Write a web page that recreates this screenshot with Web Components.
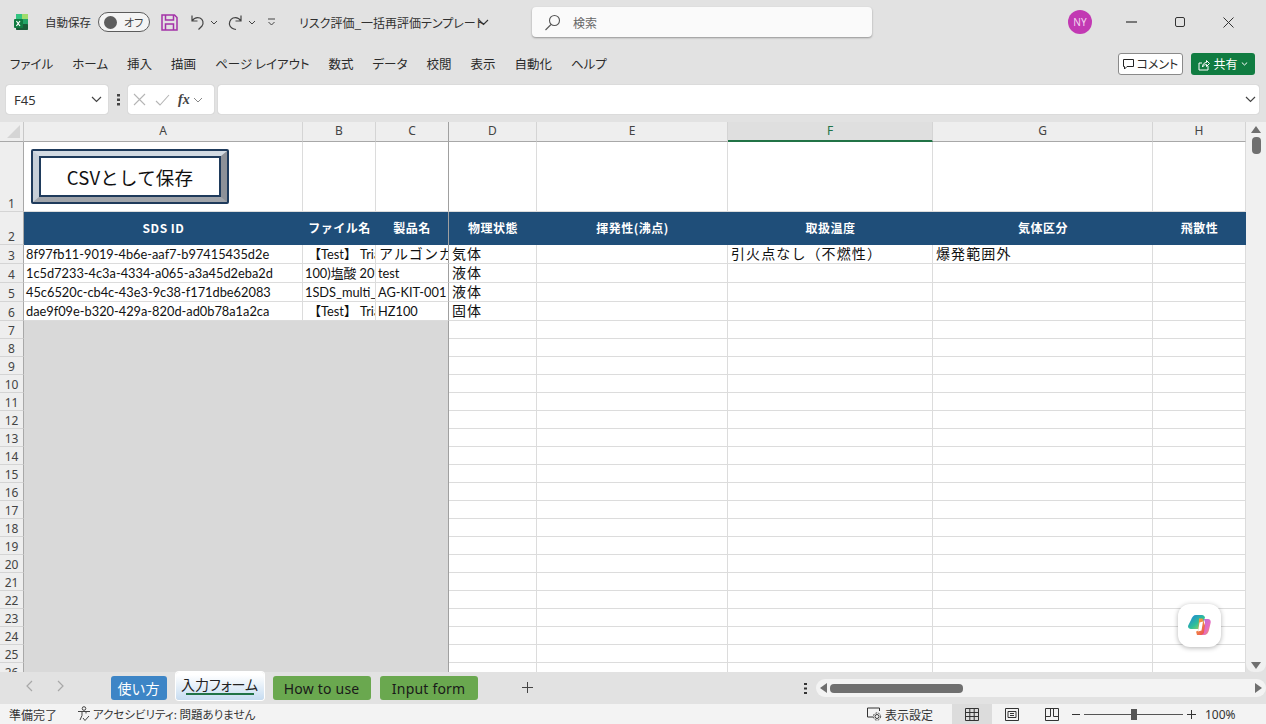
<!DOCTYPE html>
<html lang="ja">
<head>
<meta charset="utf-8">
<title>Excel</title>
<style>
  html,body{margin:0;height:100%;overflow:hidden;background:#e2e2e2;}
  body{font-family:"Noto Sans","Noto Sans CJK JP",sans-serif;}
</style>
</head>
<body>
<xl-app>
  <xl-titlebar slot="top" filename="リスク評価_一括再評価テンプレート.⋯"></xl-titlebar>
  <xl-ribbon slot="top">
    <span>ファイル</span><span>ホーム</span><span>挿入</span><span>描画</span><span>ページ レイアウト</span><span>数式</span><span>データ</span><span>校閲</span><span>表示</span><span>自動化</span><span>ヘルプ</span>
  </xl-ribbon>
  <xl-formula slot="top" cell="F45"></xl-formula>
  <xl-sheet slot="main"></xl-sheet>
  <xl-tabs slot="bottom">
    <sheet-tab kind="blue">使い方</sheet-tab>
    <sheet-tab kind="active">入力フォーム</sheet-tab>
    <sheet-tab kind="green">How to use</sheet-tab>
    <sheet-tab kind="green">Input form</sheet-tab>
  </xl-tabs>
  <xl-status slot="bottom"></xl-status>
</xl-app>

<script>
const CJK = '"Noto Sans CJK JP","Noto Sans",sans-serif';

class XlApp extends HTMLElement {
  constructor() {
    super();
    this.attachShadow({ mode: "open" });
    this.shadowRoot.innerHTML = `
      <style>
        :host{display:flex;flex-direction:column;width:1266px;height:724px;overflow:hidden;background:#e2e2e2;}
      </style>
      <slot name="top"></slot>
      <slot name="main"></slot>
      <slot name="bottom"></slot>`;
  }
}

class XlTitlebar extends HTMLElement {
  constructor() {
    super();
    this.attachShadow({ mode: "open" });
    const name = this.getAttribute("filename") || "";
    this.shadowRoot.innerHTML = `
      <style>
        :host{display:flex;align-items:center;height:44px;box-sizing:border-box;padding-left:14px;font:11.5px ${CJK};color:#303030;font-feature-settings:"palt";}
        svg{display:block;flex:none;}
        .auto{margin-left:17px;width:46px;white-space:nowrap;}
        .toggle{margin-left:7px;width:52px;height:20px;box-sizing:border-box;border:1px solid #5c5c5c;border-radius:10px;background:#f4f4f4;display:flex;align-items:center;padding:0 3px;gap:7px;font-size:11px;color:#444;}
        .toggle i{width:13px;height:13px;margin-left:2px;border-radius:50%;background:#5e5e5e;}
        .file{margin-left:23px;width:186px;font-size:12px;white-space:nowrap;overflow:hidden;}
        .search{margin-left:34px;width:340px;height:30px;box-sizing:border-box;background:#fafafa;border-radius:4px;box-shadow:0 1px 2px rgba(0,0,0,.35);display:flex;align-items:center;padding-left:12px;gap:12px;color:#666;font-size:12px;}
        .avatar{margin-left:196px;width:24px;height:24px;border-radius:50%;background:#c239b3;color:#f3d6ef;font:10px "Noto Sans",sans-serif;display:flex;align-items:center;justify-content:center;}
      </style>
      <svg width="14" height="16" viewBox="0 0 14 16"><rect x="2" y="0" width="12" height="16" rx="1.5" fill="#21a366"/><rect x="8" y="0" width="6" height="5" fill="#9fdc6c"/><rect x="2" y="0" width="6" height="5" fill="#33c481"/><rect x="2" y="10" width="12" height="6" rx="1" fill="#185c37"/><rect x="0" y="5" width="9" height="9" rx="1" fill="#107c41"/><path d="M2.4 7l3.6 5M6 7l-3.6 5" stroke="#fff" stroke-width="1.2"/></svg>
      <span class="auto">自動保存</span>
      <div class="toggle"><i></i><span>オフ</span></div>
      <svg style="margin-left:11px" width="17" height="17" viewBox="0 0 17 17" fill="none" stroke="#a433a8" stroke-width="1.5"><path d="M1 1h12.5L16 3.5V16H1z"/><path d="M4.5 1v5h8V1M4.5 16v-6h8v6"/></svg>
      <svg style="margin-left:12px" width="16" height="17" viewBox="0 0 16 17" fill="none" stroke="#444" stroke-width="1.2"><path d="M2 1.5V7h5.5M2 7c2-3 5-4 8-3 3 1.500 4 5 2 8l-3.500 3.500"/></svg>
      <svg style="margin-left:4px" width="8" height="5" viewBox="0 0 8 5" fill="none" stroke="#444"><path d="M1 1l3 3 3-3"/></svg>
      <svg style="margin-left:9px" width="16" height="17" viewBox="0 0 16 17" fill="none" stroke="#444" stroke-width="1.2"><path d="M14 1.500V7H8.500M14 7c-2-3-5-4-8-3C3 5.500 1.500 9 3 12c1 2 3 3 6 3.500"/></svg>
      <svg style="margin-left:5px" width="8" height="5" viewBox="0 0 8 5" fill="none" stroke="#444"><path d="M1 1l3 3 3-3"/></svg>
      <svg style="margin-left:11px" width="9" height="8" viewBox="0 0 9 8" fill="none" stroke="#444"><path d="M1 1h7M1.500 4l3 3 3-3"/></svg>
      <span class="file" style="margin-left:23px">${name}</span>
      <svg style="margin-left:-7px" width="11" height="7" viewBox="0 0 11 7" fill="none" stroke="#333" stroke-width="1.1"><path d="M1 1l4.500 4.500L10 1"/></svg>
      <div class="search" style="margin-left:43px">
        <svg width="17" height="17" viewBox="0 0 17 17" fill="none" stroke="#555" stroke-width="1.1"><circle cx="10.500" cy="6.500" r="5"/><path d="M7 10.500L1.500 16"/></svg>
        <span>検索</span>
      </div>
      <div class="avatar">NY</div>
      <svg style="margin-left:34px" width="11" height="2" viewBox="0 0 11 2"><path d="M0 1h11" stroke="#333" stroke-width="1.200"/></svg>
      <svg style="margin-left:38px" width="10" height="10" viewBox="0 0 10 10" fill="none" stroke="#333"><rect x=".5" y=".5" width="9" height="9" rx="1.500"/></svg>
      <svg style="margin-left:38px" width="11" height="11" viewBox="0 0 11 11" fill="none" stroke="#333"><path d="M.5.5l10 10M10.500.5l-10 10"/></svg>`;
  }
}

class XlRibbon extends HTMLElement {
  constructor() {
    super();
    this.attachShadow({ mode: "open" });
    this.shadowRoot.innerHTML = `
      <style>
        :host{display:flex;align-items:center;height:40px;box-sizing:border-box;padding:0 11px 0 10px;font:12.5px/1 ${CJK};color:#2b2b2b;font-feature-settings:"palt";}
        .tabs{display:flex;gap:19px;flex:1;white-space:nowrap;}
        ::slotted(span){display:block;}
        .btn{height:22px;box-sizing:border-box;border-radius:3px;display:flex;align-items:center;justify-content:center;gap:3px;font-size:12px;}
        .comment{width:65px;background:#fff;border:1px solid #8a8a8a;}
        .share{width:64px;margin-left:8px;background:#107c41;color:#fff;}
        svg{display:block;flex:none;}
      </style>
      <div class="tabs"><slot></slot></div>
      <div class="btn comment">
        <svg width="11" height="11" viewBox="0 0 11 11" fill="none" stroke="#222"><path d="M.5.500h10v7H4L1.500 10V7.500h-1z"/></svg>
        <span>コメント</span>
      </div>
      <div class="btn share">
        <svg width="12" height="13" viewBox="0 0 12 13" fill="none" stroke="#fff"><path d="M4 5H1v7h9V8M4.500 9c0-3 2-4.500 4-4.500V2.500l3 3-3 3V6.500c-1.500 0-3 .8-4 2.500z"/></svg>
        <span>共有</span>
        <svg width="7" height="4" viewBox="0 0 7 4" fill="none" stroke="#fff"><path d="M.8.500l2.700 2.500L6.200.500"/></svg>
      </div>`;
  }
}

class XlFormula extends HTMLElement {
  constructor() {
    super();
    this.attachShadow({ mode: "open" });
    this.shadowRoot.innerHTML = `
      <style>
        :host{display:flex;align-items:flex-start;height:38px;box-sizing:border-box;padding:1px 7px 0 6px;font:13px "Noto Sans",sans-serif;color:#333;}
        .box{height:29px;box-sizing:border-box;background:#fff;border-radius:3px;box-shadow:0 0 1px rgba(0,0,0,.3);display:flex;align-items:center;}
        .name{width:102px;padding:0 6px 0 8px;justify-content:space-between;}
        .dots{width:20px;height:29px;display:flex;align-items:center;justify-content:center;}
        .fx{width:86px;padding-left:5px;gap:9px;}
        .fx b{font:italic bold 14px "Liberation Serif",serif;color:#444;margin-left:-1px;margin-right:-6px;}
        .input{flex:1;margin-left:4px;justify-content:flex-end;padding-right:3px;}
        svg{display:block;flex:none;}
      </style>
      <div class="box name"><span>${this.getAttribute("cell")}</span>
        <svg width="11" height="7" viewBox="0 0 11 7" fill="none" stroke="#444" stroke-width="1.2"><path d="M1 1l4.500 4.500L10 1"/></svg></div>
      <div class="dots"><svg width="3" height="12" viewBox="0 0 3 12" fill="#444"><rect width="3" height="2.500"/><rect y="4.500" width="3" height="2.500"/><rect y="9" width="3" height="2.500"/></svg></div>
      <div class="box fx">
        <svg width="13" height="13" viewBox="0 0 13 13" fill="none" stroke="#b5b5b5" stroke-width="1.100"><path d="M1 1l11 11M12 1L1 12"/></svg>
        <svg width="15" height="12" viewBox="0 0 15 12" fill="none" stroke="#b5b5b5" stroke-width="1.100"><path d="M1 7l4 4 9-10"/></svg>
        <b>fx</b>
        <svg width="10" height="6" viewBox="0 0 10 6" fill="none" stroke="#888"><path d="M1 1l4 4 4-4"/></svg>
      </div>
      <div class="box input"><svg width="11" height="7" viewBox="0 0 11 7" fill="none" stroke="#444" stroke-width="1.2"><path d="M1 1l4.500 4.500L10 1"/></svg></div>`;
  }
}

const COLS = [["A",279],["B",73],["C",73],["D",88],["E",191],["F",205],["G",220],["H",93]];
const HEADS = ["SDS ID","ファイル名","製品名","物理状態","揮発性(沸点)","取扱温度","気体区分","飛散性"];
const DATA = {
  3: ["8f97fb11-9019-4b6e-aaf7-b97415435d2e","&nbsp;【Test】 Trial","アルゴンガス","気体","","引火点なし（不燃性）","爆発範囲外",""],
  4: ["1c5d7233-4c3a-4334-a065-a3a45d2eba2d","100)塩酸 20%","test","液体","","","",""],
  5: ["45c6520c-cb4c-43e3-9c38-f171dbe62083","1SDS_multi_kit","AG-KIT-001","液体","","","",""],
  6: ["dae9f09e-b320-429a-820d-ad0b78a1a2ca","&nbsp;【Test】 Trial","HZ100","固体","","","",""]
};
const WIDE = /[\u3000-\u9fff\uff00-\uffef]/;

class XlSheet extends HTMLElement {
  constructor() {
    super();
    this.attachShadow({ mode: "open" });
    let cells = `<div class="corner"><i></i></div>`;
    COLS.forEach(([c], i) => {
      cells += `<div class="ch ${i == 2 ? "frz" : ""} ${c == "F" ? "sel" : ""}">${c}</div>`;
    });
    const heights = [20, 70, 33, 19, 19, 19, 19];
    for (let r = 1; r <= 26; r++) {
      if (r > 6) heights.push(18);
      cells += `<div class="rh">${r}</div>`;
      COLS.forEach(([c], i) => {
        const frz = i == 2 ? " frz" : "";
        if (r == 2) {
          cells += `<div class="hd${frz}">${HEADS[i]}</div>`;
        } else if (r >= 7 && i < 3) {
          cells += `<div class="gray${frz}"></div>`;
        } else {
          const t = (DATA[r] && DATA[r][i]) || "";
          const cjk = t && WIDE.test(t) && i != 1;
          cells += `<div class="c${frz}${cjk ? " cjk" : ""}">${t}</div>`;
        }
      });
    }
    this.shadowRoot.innerHTML = `
      <style>
        :host{display:flex;height:550px;margin-top:0;flex:none;position:relative;overflow:hidden;}
        .grid{display:grid;width:1246px;flex:none;height:550px;overflow:hidden;background:#fff;
          grid-template-columns:24px ${COLS.map(c => c[1] + "px").join(" ")};
          grid-template-rows:${heights.map(h => h + "px").join(" ")};}
        .grid>div{box-sizing:border-box;min-width:0;overflow:hidden;white-space:nowrap;}
        .corner{background:#eee;border-right:1px solid #c8c8c8;border-bottom:1px solid #a8a8a8;position:relative;}
        .corner i{position:absolute;right:3px;bottom:3px;border-style:solid;border-width:0 0 13px 13px;border-color:transparent transparent #d5d5d5 transparent;}
        .ch{background:#eee;border-right:1px solid #d4d4d4;border-bottom:1px solid #a8a8a8;font:12px/18px "Noto Sans",sans-serif;color:#444;text-align:center;}
        .ch.sel{background:#dfdfdf;border-bottom:2px solid #217346;color:#217346;}
        .rh{background:#eee;border-right:1px solid #a8a8a8;border-bottom:1px solid #d4d4d4;font:12px/1 "Noto Sans",sans-serif;color:#444;text-align:center;display:flex;align-items:flex-end;justify-content:center;padding-bottom:1px;}
        .c{border-right:1px solid #dcdcdc;border-bottom:1px solid #dcdcdc;padding-left:2px;font:12.8px/18px "Lato","Noto Sans","Noto Sans CJK JP",sans-serif;color:#111;}
        .c.cjk{font:14px/17px ${CJK};letter-spacing:1.1px;padding-left:3px;}
        .hd{background:#1f4e79;color:#fff;font:bold 12px/32px ${CJK};text-align:center;letter-spacing:.5px;}
        .gray{background:#d9d9d9;}
        .grid>.frz{border-right:1px solid #a0a0a0;}
        .vbar{flex:1;background:#f0f0f0;border-radius:0 0 8px 8px;position:relative;display:flex;flex-direction:column;align-items:center;padding-top:4px;box-sizing:border-box;}
        .up{border:5px solid transparent;border-top:0;border-bottom:7px solid #6f6f6f;}
        .thumb{width:9px;height:17px;border-radius:4px;background:#6f6f6f;margin-top:4px;}
        .dn{margin-top:auto;margin-bottom:3px;border:5px solid transparent;border-bottom:0;border-top:7px solid #6f6f6f;}
        .csv{position:absolute;left:31px;top:27px;width:198px;height:55px;box-sizing:border-box;border:2px solid #1f3b5c;border-radius:2px;background:#fff;}
        .csv .bevel{box-sizing:border-box;height:100%;border-style:solid;border-width:5px 6px 5px 6px;border-color:#d3dbe3 #8d9198 #a0a4aa #c6cfd8;}
        .csv .in{box-sizing:border-box;height:100%;border:2px solid #1f3b5c;background:#fff;display:flex;align-items:center;justify-content:center;font:18.500px ${CJK};color:#111;letter-spacing:.2px;}
        .cop{position:absolute;left:1178px;top:482px;width:43px;height:43px;border-radius:12px;background:#fff;box-shadow:0 1px 5px rgba(0,0,0,.3);display:flex;align-items:center;justify-content:center;}
      </style>
      <div class="grid">${cells}</div>
      <div class="vbar"><i class="up"></i><div class="thumb"></div><i class="dn"></i></div>
      <div class="csv"><div class="bevel"><div class="in">CSVとして保存</div></div></div>
      <div class="cop">
        <svg width="23" height="21" viewBox="0 0 23 21">
          <defs>
            <linearGradient id="a" x1="0" y1="0" x2="1" y2="1"><stop offset="0" stop-color="#1b7fe0"/><stop offset=".55" stop-color="#2fbf9a"/><stop offset="1" stop-color="#c2d94a"/></linearGradient>
            <linearGradient id="b" x1="0" y1="0" x2="1" y2="1"><stop offset="0" stop-color="#b06be8"/><stop offset=".6" stop-color="#e56bc0"/><stop offset="1" stop-color="#f5a04a"/></linearGradient>
            <linearGradient id="d" x1="0" y1="0" x2="1" y2="1"><stop offset="0" stop-color="#f7b733"/><stop offset="1" stop-color="#e83e5a"/></linearGradient>
          </defs>
          <path d="M8 0h6c1.500 0 2.500 1 3 2.500l-3.500 9c-.6 1.500-1.500 2.500-3 2.500H3c-2 0-3.500-1.500-2.800-3.500L3 5C4 2 5.500 0 8 0z" fill="url(#a)"/>
          <path d="M11 3.500l-.5 10c0 2-1 3-2.500 3l1 3.500h5c2 0 3-1 3.500-2.500l1-3-4-11z" fill="url(#d)"/>
          <path d="M16.500 4H20c1.800 0 3 1.500 2.700 3.500L21 15c-.6 3-2.500 5-5 5h-3c1.500 0 2.500-1 3-2.500l1-8c.2-2-.3-4-1.500-5.500z" fill="url(#b)"/>
          <path d="M11.500 7.500l3.500-1-1.500 9-3.500 1z" fill="#fff"/>
        </svg>
      </div>`;
  }
}

class SheetTab extends HTMLElement {
  constructor() {
    super();
    this.attachShadow({ mode: "open" });
    const kind = this.getAttribute("kind");
    this.shadowRoot.innerHTML = `
      <style>
        :host{display:flex;align-items:flex-end;height:28px;flex:none;}
        .t{height:24px;box-sizing:border-box;border-radius:3px;padding:0 11px;display:flex;align-items:center;font:14px ${kind == "green" ? '"Noto Sans"' : '"Noto Sans CJK JP"'},sans-serif;white-space:nowrap;}
        .blue{background:#3d85c6;color:#fff;width:56px;padding:0;justify-content:center;}
        .green{background:#6aa84f;color:#1a1a1a;width:98px;padding:0;justify-content:center;letter-spacing:.2px;}
        .active{height:28px;width:88px;padding:0 0 3px;justify-content:center;flex-direction:column;background:linear-gradient(#fff 10%,#c6dcf1);border-radius:3px;font-feature-settings:"palt";color:#222;box-shadow:0 0 0 1px #fff;}
        .active span{line-height:18px;}
        .active i{display:block;width:68px;height:2px;background:#217346;margin-top:0;}
      </style>
      <div class="t ${kind}"><span><slot></slot></span>${kind == "active" ? "<i></i>" : ""}</div>`;
  }
}

class XlTabs extends HTMLElement {
  constructor() {
    super();
    this.attachShadow({ mode: "open" });
    this.shadowRoot.innerHTML = `
      <style>
        :host{display:flex;align-items:flex-start;height:32px;flex:none;position:relative;}
        .nav{width:114px;height:28px;display:flex;align-items:center;box-sizing:border-box;padding-left:25px;gap:24px;}
        .list{display:flex;width:377px;}
        ::slotted(sheet-tab){margin-right:9px;}
        .add{width:86px;height:30px;display:flex;align-items:center;justify-content:center;}
        .right{margin-left:0;display:flex;align-items:center;height:28px;}
        .hbar{margin:7px 0 0 0;width:467px;height:18px;background:#f3f3f3;border-radius:9px;display:flex;align-items:center;padding:0 4px;box-sizing:border-box;}
        .hbar .l{border:5px solid transparent;border-left:0;border-right:7px solid #6f6f6f;}
        .hbar .th{width:133px;height:9px;border-radius:4px;background:#6f6f6f;margin-left:3px;}
        .hbar .r{margin-left:auto;border:5px solid transparent;border-right:0;border-left:7px solid #6f6f6f;}
        .dots{width:70px;height:32px;display:flex;align-items:center;justify-content:center;margin-left:143px;}
        svg{display:block;}
      </style>
      <div class="nav">
        <svg width="8" height="12" viewBox="0 0 8 12" fill="none" stroke="#a8a8a8" stroke-width="1.200"><path d="M7 1L2 6l5 5"/></svg>
        <svg width="8" height="12" viewBox="0 0 8 12" fill="none" stroke="#a8a8a8" stroke-width="1.200"><path d="M1 1l5 5-5 5"/></svg>
      </div>
      <div class="list"><slot></slot></div>
      <div class="add"><svg width="11" height="11" viewBox="0 0 11 11" stroke="#444"><path d="M5.500 0v11M0 5.500h11"/></svg></div>
      <div class="dots" style="width:0;margin-left:142px"></div>
      <div class="dots" style="width:22px;margin-left:84px"><svg width="3" height="11" viewBox="0 0 3 11" fill="#333"><rect width="3" height="2"/><rect y="4.500" width="3" height="2"/><rect y="9" width="3" height="2"/></svg></div>
      <div class="hbar"><i class="l"></i><div class="th"></div><i class="r"></i></div>`;
  }
}

class XlStatus extends HTMLElement {
  constructor() {
    super();
    this.attachShadow({ mode: "open" });
    this.shadowRoot.innerHTML = `
      <style>
        :host{display:flex;align-items:center;height:20px;flex:none;background:#f3f3f3;font:12px ${CJK};color:#333;font-feature-settings:"palt";padding-left:9px;box-sizing:border-box;white-space:nowrap;}
        svg{display:block;flex:none;}
        .vw{height:20px;width:40px;display:flex;align-items:center;justify-content:center;}
        .vw.on{background:#dcdcdc;}
        .slider{width:99px;height:1px;background:#555;position:relative;margin:0 4px;}
        .slider i{position:absolute;left:47px;top:-5px;width:6px;height:11px;background:#555;}
      </style>
      <span style="width:48px">準備完了</span>
      <svg style="margin-left:20px" width="14" height="16" viewBox="0 0 14 16" fill="none" stroke="#444"><circle cx="7" cy="2.500" r="1.800"/><path d="M1 5.500h12M5 5.500v4L3 14M9 5.500v2M6 12l2 2.500 4-4.500"/></svg>
      <span style="margin-left:2px;width:151px;font-size:11.5px">アクセシビリティ: 問題ありません</span>
      <svg style="margin-left:623px" width="15" height="14" viewBox="0 0 15 14" fill="none" stroke="#333"><path d="M6 10H.5V1h12v3"/><circle cx="10" cy="9.500" r="2"/><circle cx="10" cy="9.500" r="3.600" stroke-dasharray="1.800 1.200"/></svg>
      <span style="margin-left:3px;width:48px">表示設定</span>
      <div class="vw on" style="margin-left:19px"><svg width="14" height="13" viewBox="0 0 14 13" fill="none" stroke="#333"><path d="M.5.500h13v12H.5zM.5 4.500h13M.5 8.500h13M4.800.500v12M9.200.500v12"/></svg></div>
      <div class="vw"><svg width="14" height="13" viewBox="0 0 14 13" fill="none" stroke="#333"><path d="M.5.500h13v12H.5zM3 3.500h8v6H3zM5 5.500h4M5 7.500h4"/></svg></div>
      <div class="vw"><svg width="14" height="13" viewBox="0 0 14 13" fill="none" stroke="#333"><path d="M.5.500h13v12H.5zM.5 8.500h5V.500M8.500.500v8h5"/></svg></div>
      <svg width="8" height="1" style="margin-left:0"><path d="M0 .5h8" stroke="#333"/></svg>
      <div class="slider"><i></i></div>
      <svg width="9" height="9"><path d="M4.500 0v9M0 4.500h9" stroke="#333"/></svg>
      <span style="margin-left:9px;font:12px 'Noto Sans',sans-serif">100%</span>`;
  }
}

customElements.define("xl-app", XlApp);
customElements.define("xl-titlebar", XlTitlebar);
customElements.define("xl-ribbon", XlRibbon);
customElements.define("xl-formula", XlFormula);
customElements.define("xl-sheet", XlSheet);
customElements.define("sheet-tab", SheetTab);
customElements.define("xl-tabs", XlTabs);
customElements.define("xl-status", XlStatus);
</script>
</body>
</html>
